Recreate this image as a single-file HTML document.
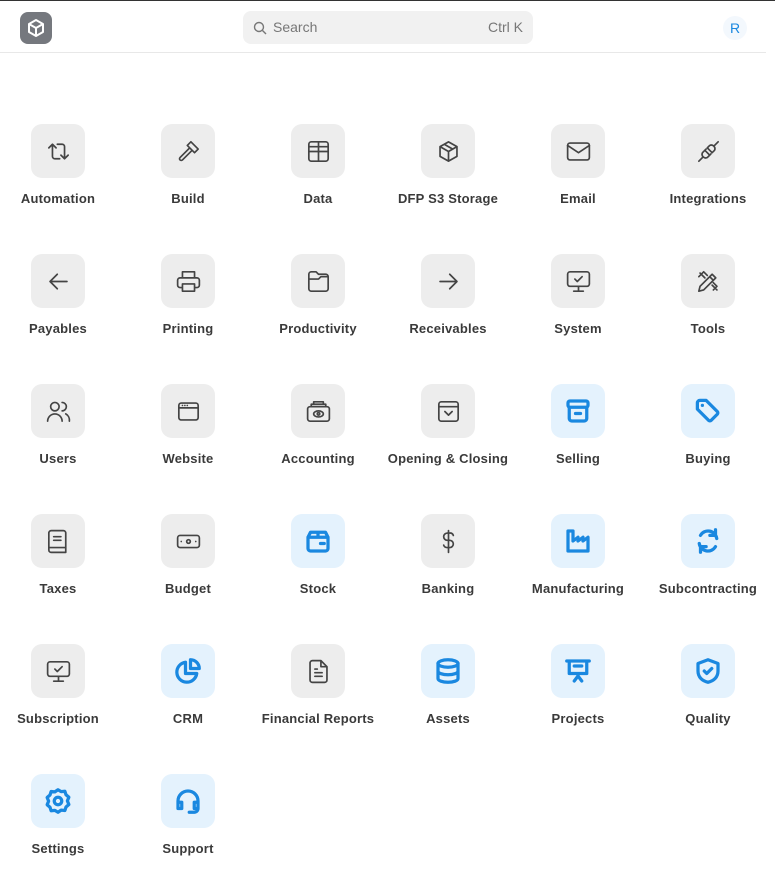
<!DOCTYPE html>
<html><head><meta charset="utf-8"><style>
*{margin:0;padding:0;box-sizing:border-box}
body{width:775px;height:878px;background:#fff;font-family:"Liberation Sans",sans-serif;position:relative;overflow:hidden;border-top:1px solid #333}
.hdr{position:absolute;left:0;top:0;width:766px;height:52px;border-bottom:1px solid #e8e8e8}
.logo{position:absolute;left:20px;top:11px;width:32px;height:32px;border-radius:8px;background:#75787e}
.search{position:absolute;left:243px;top:10px;width:290px;height:33px;border-radius:8px;background:#f1f1f1;color:#777;font-size:14px}
.av{position:absolute;left:723px;top:15px;width:24px;height:24px;border-radius:12px;background:#f3f8fd;color:#1a88e0;font-size:14px;text-align:center;line-height:24px}
.it{position:absolute;width:130px;text-align:center}
.box{width:54px;height:54px;border-radius:11px;background:#ededed;margin:0 auto;display:flex;align-items:center;justify-content:center}
.box.b{background:#e4f2fd}
.lb{margin-top:13px;font-size:13px;font-weight:bold;color:#3a3a3a;white-space:nowrap;letter-spacing:0.2px}
svg{display:block}
</style></head><body>
<div class="hdr">
<div class="logo"><svg width="32" height="32" viewBox="0 0 32 32" fill="none" stroke="#fff" stroke-width="2" stroke-linejoin="round"><path d="M16 8l7 4v8l-7 4-7-4v-8z M9 12l7 4 7-4 M16 16v8"/></svg></div>
<div class="search"><svg style="position:absolute;left:10px;top:10px" width="14" height="14" viewBox="0 0 14 14" fill="none" stroke="#777" stroke-width="1.4"><circle cx="6" cy="6" r="4.5"/><path d="M9.5 9.5L13 13"/></svg><span style="position:absolute;left:30px;top:8px">Search</span><span style="position:absolute;right:10px;top:8px">Ctrl K</span></div>
<div class="av">R</div>
</div>
<div id="g"></div>
<script>
var G='fill="none" stroke="#444" stroke-width="1.4" stroke-linecap="round" stroke-linejoin="round"';
var B='fill="none" stroke="#1a88e0" stroke-width="2.6" stroke-linecap="round" stroke-linejoin="round"';
function g(p){return '<svg width="29" height="29" viewBox="0 0 24 24" '+G+'>'+p+'</svg>'}
function b(p){return '<svg width="30" height="30" viewBox="0 0 24 24" '+B+'>'+p+'</svg>'}
var items=[
['Automation',g('<path d="M4 9l3-3 3 3M7 6v10a2 2 0 0 0 2 2h4M20 15l-3 3-3-3M17 18V8a2 2 0 0 0-2-2h-4"/>')],
['Build',g('<path d="M13 9l-8 8a1.4 1.4 0 0 0 2 2l8-8M11 7l3-3 6 6-3 3z"/>')],
['Data',g('<rect x="4" y="4" width="16" height="16" rx="2"/><path d="M4 12h16M12 4v16M4 8h16"/>')],
['DFP S3 Storage',g('<path d="M12 4l7 4v8l-7 4-7-4V8z M5 8l7 4 7-4 M12 12v8 M8.5 6l7 4"/>')],
['Email',g('<rect x="3" y="5" width="18" height="14" rx="2"/><path d="M3 7l9 6 9-6"/>')],
['Integrations',g('<path d="M4 20l3-3M17 7l3-3M9 11l-2 2a3 3 0 0 0 4 4l2-2zM15 13l2-2a3 3 0 0 0-4-4l-2 2zM10 10l-1.5 1.5M14 14l-1.5 1.5"/>')],
['Payables',g('<path d="M19 12H5M11 6l-6 6 6 6"/>')],
['Printing',g('<path d="M7 9V4h10v5M7 17H5a2 2 0 0 1-2-2v-4a2 2 0 0 1 2-2h14a2 2 0 0 1 2 2v4a2 2 0 0 1-2 2h-2M7 14h10v6H7z"/>')],
['Productivity',g('<path d="M4 8V6a2 2 0 0 1 2-2h4l2 2h6a2 2 0 0 1 2 2v10a2 2 0 0 1-2 2H6a2 2 0 0 1-2-2zM4 10h8l2-2h6"/>')],
['Receivables',g('<path d="M5 12h14M13 6l6 6-6 6"/>')],
['System',g('<rect x="3" y="4" width="18" height="12" rx="2"/><path d="M12 16v4M8 20h8M9 10l2 2 4-4"/>')],
['Tools',g('<path d="M4 20l1-4 10-10 3 3-10 10zM13 8l3 3M5 5l4 4M15 15l4 4M4 8l4-4 3 3M16 13l3 3-3 3"/>')],
['Users',g('<circle cx="9" cy="8" r="3.5"/><path d="M3 20a6 6 0 0 1 12 0M15 4.5a3.5 3.5 0 0 1 0 7M18 14a6 6 0 0 1 3 6"/>')],
['Website',g('<rect x="4" y="5" width="16" height="14" rx="2"/><path d="M4 9h16M7 7h.01M9 7h.01M11 7h.01"/>')],
['Accounting',g('<rect x="3" y="8" width="18" height="12" rx="2"/><path d="M6 8V6h12v2M8 6V4h8v2"/><ellipse cx="12" cy="14" rx="4" ry="2.5"/><circle cx="12" cy="14" r="1"/>')],
['Opening & Closing',g('<rect x="4" y="4" width="16" height="16" rx="2"/><path d="M4 8h16M9 12l3 3 3-3"/>')],
['Selling',b('<rect x="4" y="4" width="16" height="5" rx="1.5"/><path d="M5 9v9a2 2 0 0 0 2 2h10a2 2 0 0 0 2-2V9M10 14h4"/>')],
['Buying',b('<path d="M3.5 5.5v5l9 9a1.5 1.5 0 0 0 2 0l5-5a1.5 1.5 0 0 0 0-2l-9-9h-5a2 2 0 0 0-2 2zM7.5 7.5h.01"/>')],
['Taxes',g('<path d="M6 3h10a2 2 0 0 1 2 2v16H6a2 2 0 0 1-2-2V5a2 2 0 0 1 2-2zM4 17h14M8 8h6M8 11h6"/>')],
['Budget',g('<rect x="3" y="7" width="18" height="10" rx="2"/><circle cx="12" cy="12" r="1.5"/><path d="M6 12h.01M18 12h.01"/>')],
['Stock',b('<path d="M4 9l2-4h12l2 4v9a2 2 0 0 1-2 2H6a2 2 0 0 1-2-2zM4 9h16M12 5v4M14 14h3"/>')],
['Banking',g('<path d="M16 7a3 3 0 0 0-3-2h-2a3 3 0 0 0 0 6h2a3 3 0 0 1 0 6h-2a3 3 0 0 1-3-2M12 3v18"/>')],
['Manufacturing',b('<path d="M4 4h4v8l4-3v3l4-3v3l4-3v11H4z"/>')],
['Subcontracting',b('<path d="M19 10A7 7 0 0 0 6 7.5M5 14a7 7 0 0 0 13 2.5M18 3v4.5h-4.5M6 21v-4.5h4.5"/>')],
['Subscription',g('<rect x="3" y="4" width="18" height="12" rx="2"/><path d="M12 16v4M8 20h8M9 10l2 2 4-4"/>')],
['CRM',b('<path d="M10 5a8 8 0 1 0 9 9h-9z"/><path d="M14 3v7h7a7 7 0 0 0-7-7z"/>')],
['Financial Reports',g('<path d="M14 3H7a2 2 0 0 0-2 2v14a2 2 0 0 0 2 2h10a2 2 0 0 0 2-2V8zM14 3v5h5M9 13h6M9 16h6M9 10h2"/>')],
['Assets',b('<ellipse cx="12" cy="6" rx="8" ry="3"/><path d="M4 6v12c0 1.7 3.6 3 8 3s8-1.3 8-3V6M4 12c0 1.7 3.6 3 8 3s8-1.3 8-3"/>')],
['Projects',b('<path d="M3 4h18M5 4v10h14V4M12 14v2M9 20l3-4 3 4M9 8h6"/>')],
['Quality',b('<path d="M12 3l8 3v6c0 5-3.5 8-8 9-4.5-1-8-4-8-9V6z"/><path d="M9 12l2 2 4-4"/>')],
['Settings',b('<circle cx="12" cy="12" r="3"/><path d="M12 3l2.5 1.5 3-.3.9 2.8 2.3 2-1.2 2.9 1.2 2.9-2.3 2-.9 2.8-3-.3L12 21l-2.5-1.5-3 .3-.9-2.8-2.3-2 1.2-2.9-1.2-2.9 2.3-2 .9-2.8 3 .3z"/>')],
['Support',b('<path d="M4 15v-3a8 8 0 0 1 16 0v3M4 13h3v5H4zM17 13h3v5h-3zM20 18a3 3 0 0 1-3 3h-4"/>')]
];
var h='';
items.forEach(function(it,i){var c=i%6,r=Math.floor(i/6);var blue=it[1].indexOf('1a88e0')>0;
h+='<div class="it" style="left:'+(c*130-7)+'px;top:'+(123+r*130)+'px"><div class="box'+(blue?' b':'')+'">'+it[1]+'</div><div class="lb">'+it[0].replace('&','&amp;')+'</div></div>';});
document.getElementById('g').innerHTML=h;
</script>
</body></html>
